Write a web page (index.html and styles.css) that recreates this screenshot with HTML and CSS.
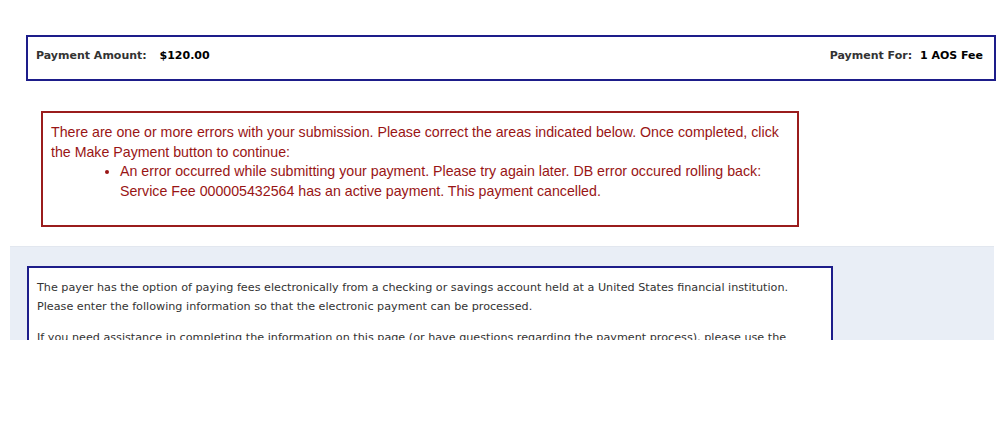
FILE: index.html
```html
<!DOCTYPE html>
<html>
<head>
    <title>Make Payment</title>
    <meta charset="UTF-8">
    <meta name="viewport" content="width=device-width, initial-scale=1.0">
    <link rel="stylesheet" href="styles.css">
</head>
<body>
    <div class="page">
        <div class="payment-summary">
            <div class="summary-item">
                <span class="summary-label">Payment Amount:</span>
                <span class="summary-value">$120.00</span>
            </div>
            <div class="summary-item summary-item-right">
                <span class="summary-label">Payment For:</span>
                <span class="summary-value">1 AOS Fee</span>
            </div>
        </div>

        <div class="error-box">
            <p>There are one or more errors with your submission. Please correct the areas indicated below. Once completed, click the Make Payment button to continue:</p>
            <ul>
                <li>An error occurred while submitting your payment. Please try again later. DB error occured rolling back: Service Fee 000005432564 has an active payment. This payment cancelled.</li>
            </ul>
        </div>

        <div class="form-panel">
            <div class="info-box">
                <p>The payer has the option of paying fees electronically from a checking or savings account held at a United States financial institution.<br>
                Please enter the following information so that the electronic payment can be processed.</p>
                <p>If you need assistance in completing the information on this page (or have questions regarding the payment process), please use the contact information provided at the bottom of this page.</p>
            </div>
        </div>
    </div>
</body>
</html>
```

FILE: styles.css
```css
body {
    margin: 0;
    padding: 0;
    background-color: white;
    font-family: 'DejaVu Sans', Verdana, sans-serif;
}
.page {
    height: 340px;
    overflow: hidden;
}
.payment-summary {
    display: flex;
    justify-content: space-between;
    align-items: center;
    height: 36px;
    margin: 35px 4px 0 26px;
    padding: 0 11px 6px 8px;
    border: 2px solid #1d1d8a;
    font-size: 11px;
    font-weight: bold;
}
.summary-label {
    color: #333;
    margin-right: 9px;
}
.summary-item-right .summary-label {
    margin-right: 4px;
}
.summary-value {
    color: #000;
}
.error-box {
    width: 736px;
    margin: 30px 0 0 41px;
    padding: 10px 10px 10px 8px;
    border: 2px solid #9a1c1c;
    color: #991515;
    font-family: 'Liberation Sans', Arial, sans-serif;
    font-size: 14.2px;
    line-height: 19.6px;
}
.error-box p {
    margin: 0;
}
.error-box ul {
    margin: 0 0 14px 0;
    padding-left: 69px;
}
.form-panel {
    margin: 19px 6px 0 10px;
    padding: 19px 17px 20px 17px;
    background-color: #e9eef6;
    border-top: 1px solid #e2e7ef;
}
.info-box {
    width: 786px;
    padding: 10px 8px 4px 8px;
    border: 2px solid #1d1d8a;
    background-color: white;
    color: #333;
    font-size: 11.2px;
    line-height: 19px;
}
.info-box p {
    margin: 0 0 12px 0;
}
```
